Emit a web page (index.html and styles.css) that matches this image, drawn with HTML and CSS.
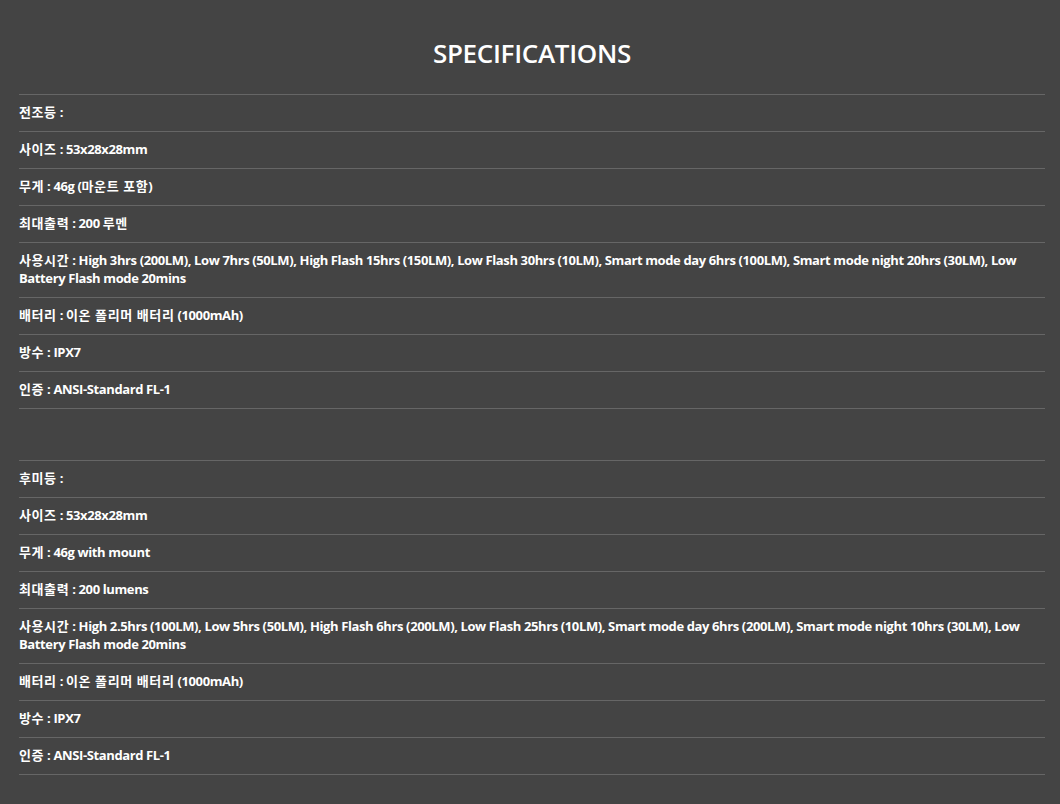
FILE: index.html
```html
<!DOCTYPE html>
<html lang="ko">
<head>
<meta charset="utf-8">
<title>Specifications</title>
<link rel="stylesheet" href="styles.css">
</head>
<body>
<div class="page">
  <h2 class="title">SPECIFICATIONS</h2>
  <ul class="spec">
    <li><span class="ko">전조등</span> :</li>
    <li><span class="ko">사이즈</span> : 53x28x28mm</li>
    <li><span class="ko">무게</span> : 46g (<span class="ko">마운트 포함</span>)</li>
    <li><span class="ko">최대출력</span> : 200 <span class="ko">루멘</span></li>
    <li><span class="ko">사용시간</span> : High 3hrs (200LM), Low 7hrs (50LM), High Flash 15hrs (150LM), Low Flash 30hrs (10LM), Smart mode day 6hrs (100LM), Smart mode night 20hrs (30LM), Low Battery Flash mode 20mins</li>
    <li><span class="ko">배터리</span> : <span class="ko">이온 폴리머 배터리</span> (1000mAh)</li>
    <li><span class="ko">방수</span> : IPX7</li>
    <li><span class="ko">인증</span> : ANSI-Standard FL-1</li>
  </ul>
  <ul class="spec spec-second">
    <li><span class="ko">후미등</span> :</li>
    <li><span class="ko">사이즈</span> : 53x28x28mm</li>
    <li><span class="ko">무게</span> : 46g with mount</li>
    <li><span class="ko">최대출력</span> : 200 lumens</li>
    <li><span class="ko">사용시간</span> : High 2.5hrs (100LM), Low 5hrs (50LM), High Flash 6hrs (200LM), Low Flash 25hrs (10LM), Smart mode day 6hrs (200LM), Smart mode night 10hrs (30LM), Low Battery Flash mode 20mins</li>
    <li><span class="ko">배터리</span> : <span class="ko">이온 폴리머 배터리</span> (1000mAh)</li>
    <li><span class="ko">방수</span> : IPX7</li>
    <li><span class="ko">인증</span> : ANSI-Standard FL-1</li>
  </ul>
</div>
</body>
</html>
```
FILE: styles.css
```css
html, body {
  margin: 0;
  padding: 0;
  background: #444444;
}
body {
  font-family: "Open Sans", "Noto Sans CJK KR", sans-serif;
  color: #ffffff;
}
.page {
  padding: 0 15px 0 19px;
}
.title {
  margin: 0 0 24px;
  padding-top: 36px;
  text-align: center;
  font-size: 26px;
  line-height: 34px;
  font-weight: 600;
  letter-spacing: -0.3px;
}
.spec {
  list-style: none;
  margin: 0;
  padding: 0;
  border-top: 1px solid #666666;
}
.spec li {
  border-bottom: 1px solid #666666;
  padding: 8px 0 10px;
  font-size: 13px;
  line-height: 18px;
  font-weight: 700;
  letter-spacing: -0.38px;
}
.spec .ko {
  letter-spacing: 0.6px;
}
.spec-second {
  margin-top: 51px;
}
```
